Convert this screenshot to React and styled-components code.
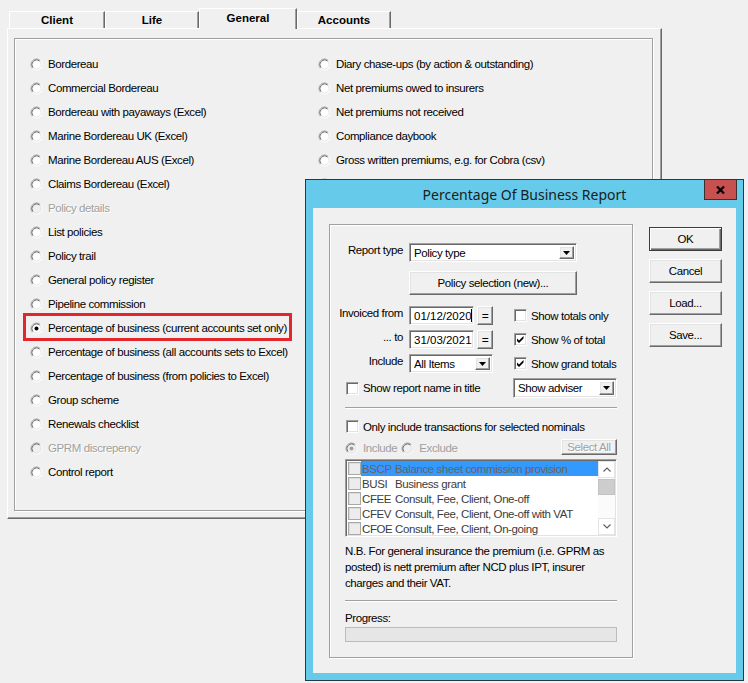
import React from "react";
import styled, { createGlobalStyle, css } from "styled-components";

const GlobalStyle = createGlobalStyle`
  html, body { margin: 0; padding: 0; background: #f0f0f0; }
  body { font-family: "Liberation Sans", Arial, sans-serif; }
`;

const Screen = styled.div`
  position: relative;
  width: 748px;
  height: 683px;
  overflow: hidden;
  box-sizing: border-box;
  padding-top: 8px;
  background: #f0f0f0;
  font-family: "Liberation Sans", Arial, sans-serif;
  font-size: 11.5px;
  letter-spacing: -0.4px;
  color: #000;
`;

/* ---------- main window ---------- */
const TabStrip = styled.div`
  display: flex;
  align-items: flex-start;
  height: 20px;
  padding-left: 9px;
`;

const Tab = styled.div`
  position: relative;
  box-sizing: border-box;
  width: ${(p) => p.$w}px;
  height: ${(p) => (p.$active ? 21 : 17)}px;
  margin-top: ${(p) => (p.$active ? 0 : 3)}px;
  z-index: ${(p) => (p.$active ? 2 : 1)};
  padding-bottom: ${(p) => (p.$active ? 3 : 0)}px;
  background: #f0f0f0;
  border-top: 1px solid #fff;
  border-left: 1px solid #fff;
  border-right: 1px solid #696969;
  box-shadow: inset -1px 0 0 #a0a0a0;
  display: flex;
  align-items: center;
  justify-content: center;
  font-weight: bold;
  font-size: 11.5px;
  letter-spacing: 0;
`;

const Panel = styled.div`
  box-sizing: border-box;
  margin-left: 7px;
  width: 655px;
  height: 491px;
  padding: 9px 8px 7px 6px;
  border-top: 1px solid #fff;
  border-left: 1px solid #fff;
  border-right: 1px solid #696969;
  border-bottom: 1px solid #696969;
  box-shadow: inset -1px -1px 0 #a0a0a0;
`;

const etched = css`
  border: 1px solid #a0a0a0;
  box-shadow: inset 1px 1px 0 #fff, 1px 1px 0 #fff;
`;

const MainGroup = styled.div`
  box-sizing: border-box;
  height: 100%;
  ${etched};
  padding: 13px 0 0 15px;
`;

const ReportGrid = styled.div`
  display: grid;
  grid-template-columns: 288px 1fr;
  grid-template-rows: repeat(18, 24px);
  grid-auto-flow: column;
`;

const OptionRow = styled.div`
  position: relative;
  display: flex;
  align-items: center;
  gap: 5px;
  white-space: nowrap;
  color: ${(p) => (p.$disabled ? "#a0a0a0" : "#000")};
  text-shadow: ${(p) => (p.$disabled ? "1px 1px 0 #fff" : "none")};
`;

const Highlight = styled.span`
  position: absolute;
  left: -7px;
  top: -3px;
  width: 269px;
  height: 28px;
  box-sizing: border-box;
  border: 3px solid #e3262b;
  pointer-events: none;
`;

const RadioSvg = styled.svg`
  flex: none;
  display: block;
`;

const Radio = ({ checked, disabled }) => (
  <RadioSvg width="13" height="13" viewBox="0 0 13 13">
    <circle cx="6.5" cy="6.5" r="5.5" fill={disabled ? "#f0f0f0" : "#fff"} />
    <path d="M2.61 10.39 A5.5 5.5 0 0 1 10.39 2.61" stroke="#a0a0a0" fill="none" />
    <path d="M10.39 2.61 A5.5 5.5 0 0 1 2.61 10.39" stroke="#fff" fill="none" />
    <path d="M3.32 9.68 A4.5 4.5 0 0 1 9.68 3.32" stroke="#696969" fill="none" />
    <path d="M9.68 3.32 A4.5 4.5 0 0 1 3.32 9.68" stroke="#e3e3e3" fill="none" />
    {checked && <circle cx="6.5" cy="6.5" r="2" fill={disabled ? "#a0a0a0" : "#000"} />}
  </RadioSvg>
);

const leftReports = [
  ["Bordereau"],
  ["Commercial Bordereau"],
  ["Bordereau with payaways (Excel)"],
  ["Marine Bordereau UK (Excel)"],
  ["Marine Bordereau AUS (Excel)"],
  ["Claims Bordereau (Excel)"],
  ["Policy details", "disabled"],
  ["List policies"],
  ["Policy trail"],
  ["General policy register"],
  ["Pipeline commission"],
  ["Percentage of business (current accounts set only)", "checked"],
  ["Percentage of business (all accounts sets to Excel)"],
  ["Percentage of business (from policies to Excel)"],
  ["Group scheme"],
  ["Renewals checklist"],
  ["GPRM discrepency", "disabled"],
  ["Control report"],
];

/* the sixth entry lies under the dialog; only its radio peeks out */
const rightReports = [
  "Diary chase-ups (by action & outstanding)",
  "Net premiums owed to insurers",
  "Net premiums not received",
  "Compliance daybook",
  "Gross written premiums, e.g. for Cobra (csv)",
  "",
];

/* ---------- dialog ---------- */
const Dialog = styled.div`
  position: absolute;
  left: 305px;
  top: 179px;
  width: 439px;
  height: 502px;
  box-sizing: border-box;
  border: 1px solid #2b3840;
  background: #66cbea;
  display: flex;
  flex-direction: column;
  padding: 0 7px 7px;
`;

const TitleBar = styled.div`
  display: flex;
  align-items: flex-start;
  height: 28px;
  flex: none;
  margin: 0 -7px;
  padding: 0 6px 0 39px;
`;

const Title = styled.div`
  flex: 1;
  text-align: center;
  line-height: 30px;
  font-family: "Noto Sans", "Open Sans", sans-serif;
  font-size: 14px;
  letter-spacing: 0;
  color: #1b1b1b;
`;

const CloseButton = styled.div`
  flex: none;
  width: 33px;
  height: 21px;
  margin-top: -1px;
  box-sizing: border-box;
  background: #c75050;
  border: 1px solid #3a3030;
  display: flex;
  align-items: center;
  justify-content: center;
`;

const Client = styled.div`
  flex: 1;
  display: flex;
  gap: 16px;
  padding: 16px 14px 0 16px;
  background: #f0f0f0;
`;

const OptionsGroup = styled.div`
  box-sizing: border-box;
  width: 304px;
  height: 434px;
  ${etched};
  padding: 18px 15px 0 8px;
  display: flex;
  flex-direction: column;
`;

const FormRow = styled.div`
  display: flex;
  align-items: center;
  height: ${(p) => p.$h || 19}px;
  margin-top: ${(p) => p.$mt || 0}px;
  padding-left: ${(p) => p.$pl || 0}px;
  white-space: nowrap;
`;

const FieldLabel = styled.div`
  align-self: flex-start;
  width: 65px;
  margin-right: 6px;
  line-height: 15px;
  text-align: right;
  flex: none;
`;

const sunken = css`
  box-sizing: border-box;
  background: #fff;
  border-style: solid;
  border-width: 1px;
  border-color: #a0a0a0 #fff #fff #a0a0a0;
  box-shadow: inset 1px 1px 0 #696969, inset -1px -1px 0 #e3e3e3;
`;

const raised = css`
  box-sizing: border-box;
  background: #f0f0f0;
  border-style: solid;
  border-width: 1px;
  border-color: #fff #696969 #696969 #fff;
  box-shadow: inset -1px -1px 0 #a0a0a0, inset 1px 1px 0 #e3e3e3;
`;

const Combo = styled.div`
  ${sunken};
  width: ${(p) => p.$w}px;
  height: ${(p) => p.$h || 19}px;
  display: flex;
  align-items: center;
  padding: 2px 2px 2px 4px;
  flex: none;
  margin-left: ${(p) => (p.$auto ? "auto" : "0")};
`;

const ComboText = styled.span`
  flex: 1;
  overflow: hidden;
`;

const ComboArrow = styled.div`
  ${raised};
  width: 15px;
  height: 100%;
  display: flex;
  align-items: center;
  justify-content: center;
  flex: none;
`;

const Arrow = () => (
  <svg width="7" height="4" viewBox="0 0 7 4">
    <polygon points="0,0 7,0 3.5,4" fill="#000" />
  </svg>
);

const DateBox = styled.div`
  ${sunken};
  width: 65px;
  height: 19px;
  padding: 0 0 0 4px;
  display: flex;
  align-items: center;
  overflow: hidden;
  letter-spacing: 0;
  flex: none;
`;

const Caret = styled.span`
  display: inline-block;
  width: 1px;
  height: 13px;
  background: #000;
  margin-left: -1px;
`;

const EqButton = styled.div`
  ${raised};
  width: 16px;
  height: 19px;
  margin-left: 3px;
  display: flex;
  align-items: center;
  justify-content: center;
  font-size: 12px;
  flex: none;
`;

const Button = styled.div`
  ${raised};
  width: ${(p) => p.$w || 73}px;
  height: ${(p) => p.$h || 24}px;
  display: flex;
  align-items: center;
  justify-content: center;
  flex: none;
  color: ${(p) => (p.$disabled ? "#a0a0a0" : "#000")};
  text-shadow: ${(p) => (p.$disabled ? "1px 1px 0 #fff" : "none")};
  margin-left: ${(p) => (p.$auto ? "auto" : "0")};
  ${(p) =>
    p.$default &&
    css`
      border: 1px solid #3c3c3c;
      box-shadow: inset 1px 1px 0 #fff, inset -1px -1px 0 #696969, inset -2px -2px 0 #a0a0a0;
    `}
`;

const CheckLine = styled.label`
  display: flex;
  align-items: center;
  gap: 4px;
  flex: none;
  margin-left: ${(p) => p.$ml || 0}px;
  color: ${(p) => (p.$disabled ? "#a0a0a0" : "#000")};
`;

const CheckBoxFrame = styled.span`
  ${sunken};
  width: 13px;
  height: 13px;
  display: flex;
  align-items: center;
  justify-content: center;
  flex: none;
`;

const Tick = () => (
  <svg width="9" height="9" viewBox="0 0 9 9">
    <path d="M1 3.5 L3 5.5 L7.5 1 L7.5 3.5 L3 8 L1 6 Z" fill="#000" />
  </svg>
);

const CheckBox = ({ checked }) => <CheckBoxFrame>{checked && <Tick />}</CheckBoxFrame>;

const Lower = styled.div`
  margin-left: 7px;
  display: flex;
  flex-direction: column;
`;

const Separator = styled.div`
  height: 1px;
  margin-top: ${(p) => p.$mt}px;
  background: #a0a0a0;
  border-bottom: 1px solid #fff;
`;

const RadioLine = styled.div`
  display: flex;
  align-items: flex-end;
  height: 16px;
  margin-top: 6px;
  white-space: nowrap;
`;

const DisabledOption = styled.span`
  display: flex;
  align-items: center;
  gap: 5px;
  line-height: 13px;
  color: #a0a0a0;
  margin-right: 4px;
`;

const ListBox = styled.div`
  ${sunken};
  margin-top: 4px;
  height: 78px;
  display: flex;
  padding: 1px;
`;

const ListRows = styled.div`
  flex: 1;
  display: flex;
  flex-direction: column;
`;

const ListRow = styled.div`
  display: flex;
  align-items: center;
  height: 15px;
  white-space: nowrap;
`;

const ListCheck = styled.span`
  box-sizing: border-box;
  width: 13px;
  height: 13px;
  margin: 0 0 0 1px;
  flex: none;
  border: 1px solid #a8a8a8;
  background: #ececec;
  box-shadow: inset 1px 1px 0 #dcdcdc;
`;

const ListText = styled.div`
  flex: 1;
  display: flex;
  height: 15px;
  align-items: center;
  padding-left: 1px;
  color: ${(p) => (p.$selected ? "#6e6258" : "#3c3c3c")};
  background: ${(p) => (p.$selected ? "#3399ff" : "transparent")};
`;

const Code = styled.span`
  width: 33px;
  flex: none;
`;

const ScrollBar = styled.div`
  width: 17px;
  flex: none;
  background: #fbfbfb;
  display: flex;
  flex-direction: column;
`;

const ScrollArrow = styled.div`
  height: 17px;
  box-sizing: border-box;
  border: 1px solid #e4e4e4;
  background: #fff;
  display: flex;
  align-items: center;
  justify-content: center;
  margin-top: ${(p) => (p.$bottom ? "auto" : "0")};
`;

const Thumb = styled.div`
  height: 16px;
  margin-top: 1px;
  background: #cdcdcd;
  border: 1px solid #c2c2c2;
  box-sizing: border-box;
`;

const Chevron = ({ up }) => (
  <svg width="8" height="5" viewBox="0 0 8 5">
    <path d={up ? "M0.5 4.5 L4 1 L7.5 4.5" : "M0.5 0.5 L4 4 L7.5 0.5"} stroke="#606060" strokeWidth="1.2" fill="none" />
  </svg>
);

const Note = styled.p`
  margin: 6px 0 0;
  line-height: 16px;
  white-space: nowrap;
`;

const ProgressLabel = styled.div`
  margin-top: 8px;
  line-height: 16px;
`;

const ProgressBar = styled.div`
  margin-top: 1px;
  height: 15px;
  box-sizing: border-box;
  border: 1px solid #bcbcbc;
  background: #e6e6e6;
`;

const ButtonColumn = styled.div`
  display: flex;
  flex-direction: column;
  gap: 8px;
  margin-top: 3px;
`;

const nominals = [
  ["BSCP", "Balance sheet commission provision", true],
  ["BUSI", "Business grant"],
  ["CFEE", "Consult, Fee, Client, One-off"],
  ["CFEV", "Consult, Fee, Client, One-off with VAT"],
  ["CFOE", "Consult, Fee, Client, On-going"],
];

export default function App() {
  return (
    <Screen>
      <GlobalStyle />
      <TabStrip>
        <Tab $w={96}>Client</Tab>
        <Tab $w={94}>Life</Tab>
        <Tab $w={98} $active>General</Tab>
        <Tab $w={94}>Accounts</Tab>
      </TabStrip>
      <Panel>
        <MainGroup>
          <ReportGrid>
            {leftReports.map(([label, state]) => (
              <OptionRow key={label} $disabled={state === "disabled"}>
                <Radio checked={state === "checked"} disabled={state === "disabled"} />
                {label}
                {state === "checked" && <Highlight />}
              </OptionRow>
            ))}
            {rightReports.map((label, i) => (
              <OptionRow key={i}>
                <Radio />
                {label}
              </OptionRow>
            ))}
          </ReportGrid>
        </MainGroup>
      </Panel>

      <Dialog>
        <TitleBar>
          <Title>Percentage Of Business Report</Title>
          <CloseButton>
            <svg width="9" height="8" viewBox="0 0 9 8">
              <path d="M1 0.5 L8 7.5 M8 0.5 L1 7.5" stroke="#000" strokeWidth="2.2" />
            </svg>
          </CloseButton>
        </TitleBar>
        <Client>
          <OptionsGroup>
            <FormRow>
              <FieldLabel>Report type</FieldLabel>
              <Combo $w={168}>
                <ComboText>Policy type</ComboText>
                <ComboArrow><Arrow /></ComboArrow>
              </Combo>
            </FormRow>
            <FormRow $h={24} $mt={9} $pl={71}>
              <Button $w={168}>Policy selection (new)...</Button>
            </FormRow>
            <FormRow $mt={11}>
              <FieldLabel>Invoiced from</FieldLabel>
              <DateBox>01/12/2020<Caret /></DateBox>
              <EqButton>=</EqButton>
              <CheckLine $ml={21}><CheckBox />Show totals only</CheckLine>
            </FormRow>
            <FormRow $mt={5}>
              <FieldLabel>... to</FieldLabel>
              <DateBox>31/03/2021</DateBox>
              <EqButton>=</EqButton>
              <CheckLine $ml={21}><CheckBox checked />Show % of total</CheckLine>
            </FormRow>
            <FormRow $mt={5}>
              <FieldLabel>Include</FieldLabel>
              <Combo $w={84}>
                <ComboText>All Items</ComboText>
                <ComboArrow><Arrow /></ComboArrow>
              </Combo>
              <CheckLine $ml={21}><CheckBox checked />Show grand totals</CheckLine>
            </FormRow>
            <FormRow $h={20} $mt={5}>
              <CheckLine $ml={8}><CheckBox />Show report name in title</CheckLine>
              <Combo $w={104} $h={20} $auto>
                <ComboText>Show adviser</ComboText>
                <ComboArrow><Arrow /></ComboArrow>
              </Combo>
            </FormRow>

            <Lower>
              <Separator $mt={9} />
              <FormRow $h={13} $mt={11}>
                <CheckLine $ml={1}><CheckBox />Only include transactions for selected nominals</CheckLine>
              </FormRow>
              <RadioLine>
                <DisabledOption><Radio checked disabled />Include</DisabledOption>
                <DisabledOption><Radio disabled />Exclude</DisabledOption>
                <Button $w={56} $h={16} $disabled $auto>Select All</Button>
              </RadioLine>
              <ListBox>
                <ListRows>
                  {nominals.map(([code, desc, sel]) => (
                    <ListRow key={code}>
                      <ListCheck />
                      <ListText $selected={sel}>
                        <Code>{code}</Code>
                        {desc}
                      </ListText>
                    </ListRow>
                  ))}
                </ListRows>
                <ScrollBar>
                  <ScrollArrow><Chevron up /></ScrollArrow>
                  <Thumb />
                  <ScrollArrow $bottom><Chevron /></ScrollArrow>
                </ScrollBar>
              </ListBox>
              <Note>
                N.B. For general insurance the premium (i.e. GPRM as
                <br />
                posted) is nett premium after NCD plus IPT, insurer
                <br />
                charges and their VAT.
              </Note>
              <Separator $mt={9} />
              <ProgressLabel>Progress:</ProgressLabel>
              <ProgressBar />
            </Lower>
          </OptionsGroup>
          <ButtonColumn>
            <Button $default>OK</Button>
            <Button>Cancel</Button>
            <Button>Load...</Button>
            <Button>Save...</Button>
          </ButtonColumn>
        </Client>
      </Dialog>
    </Screen>
  );
}
